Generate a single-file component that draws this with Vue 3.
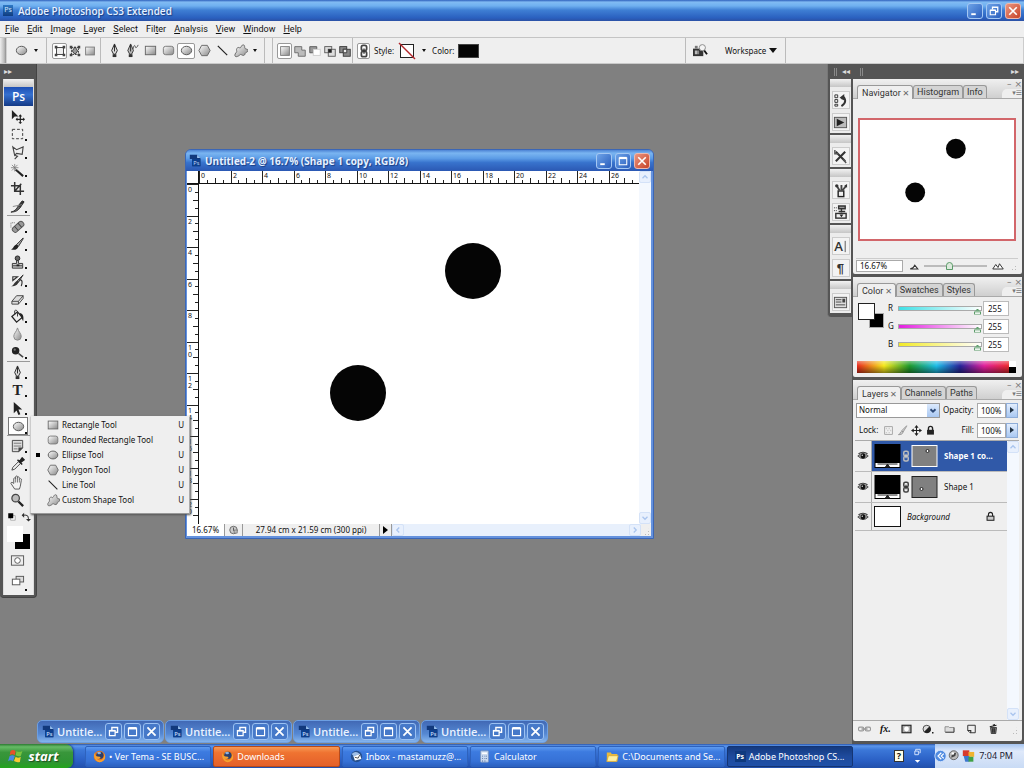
<script setup>
import { ref } from 'vue'

const menus = ['File', 'Edit', 'Image', 'Layer', 'Select', 'Filter', 'Analysis', 'View', 'Window', 'Help']
const accel = { Filter: 3 }
const menuParts = menus.map((m) => {
  const i = accel[m] || 0
  return { name: m, pre: m.slice(0, i), key: m[i], post: m.slice(i + 1) }
})

const star = 'M2 13c0-2 2-3 2-4S3 6 5 5s2 1 3 0 1-3 3-3 1 3 2 4 3 0 3 2-3 2-3 3-1 3-3 2-2-1-3 0-5 3-5 0Z'
const icons = {
  rect: '<rect x="2.500" y="3.500" width="11" height="9" fill="url(#metal)" stroke="#666"/>',
  rrect: '<rect x="2.500" y="3.500" width="11" height="9" rx="2.500" fill="url(#metal)" stroke="#777"/>',
  ellipse: '<ellipse cx="8" cy="8" rx="5.500" ry="4.500" fill="url(#metal)" stroke="#555"/>',
  polygon: '<path d="M5 2.500h6l3 5.500-3 5.500H5L2 8Z" fill="url(#metal)" stroke="#666"/>',
  line: '<path d="M3 3l10 10" stroke="#222" stroke-width="1.300"/>',
  custom: `<path d="${star}" fill="url(#metal)" stroke="#666"/>`,
  shapeLayer: '<path d="M4 4h8v8H4Z" fill="#eee" stroke="#333"/><path d="M2 2h3v3H2zM11 2h3v3h-3zM2 11h3v3H2zM11 11h3v3h-3z" fill="#444"/>',
  paths: '<path d="M4 4h8v8H4Z" fill="none" stroke="#333" stroke-dasharray="2 1"/><path d="M2 2h3v3H2zM11 2h3v3h-3zM2 11h3v3H2zM11 11h3v3h-3z" fill="#444"/><path d="M8 3l3 5-2 3H7L5 8Z" fill="#999" stroke="#333"/>',
  fillPx: '<rect x="3" y="3.500" width="10" height="9" fill="url(#metal)" stroke="#777"/>',
  pen: '<path d="M8 1l3 7-2 4H7L5 8Z" fill="#ddd" stroke="#222"/><path d="M8 2v7" stroke="#222"/><path d="M6 12h4v3H6z" fill="#333"/>',
  freePen: '<path d="M6 1l3 7-2 4H5L3 8Z" fill="#bbb" stroke="#333"/><path d="M6 2v7" stroke="#222"/><path d="M4 12h4v3H4z" fill="#333"/><path d="M9 6c0-4 2-4 2-2s2 1 3-2" fill="none" stroke="#555"/>',
  union: '<path d="M2 3h8v4h4v7H6v-4H2Z" fill="#bbb" stroke="#666"/>',
  newShape: '<rect x="3" y="3" width="10" height="10" fill="url(#metal)" stroke="#777"/>',
  subtract: '<path d="M2 10V3h8v3H6v4Z" fill="#999" stroke="#555"/><rect x="6" y="6" width="8" height="7" fill="#fff" stroke="#ccc"/>',
  intersect: '<rect x="2" y="3" width="8" height="7" fill="#ddd" stroke="#555"/><rect x="6" y="6" width="8" height="8" fill="#ddd" stroke="#555"/><path d="M6 6h4v4H6z" fill="#222"/>',
  exclude: '<rect x="2" y="3" width="8" height="7" fill="#888" stroke="#333"/><rect x="6" y="6" width="8" height="8" fill="#888" stroke="#333"/><path d="M6 6h4v4H6z" fill="#eee" stroke="#333"/>',
  chain: '<rect x="5" y="1.500" width="6" height="6" rx="2" fill="none" stroke="#444" stroke-width="2"/><rect x="5" y="8.500" width="6" height="6" rx="2" fill="none" stroke="#444" stroke-width="2"/><path d="M8 5v6" stroke="#333" stroke-width="1.500"/>',
  bridge: '<path d="M1 6h11v8H1Z" fill="#333"/><path d="M3 3h3v3H3z" fill="#777"/><path d="M3 8h3v4H3z" fill="#bbb"/><path d="M7 8v4" stroke="#999"/><circle cx="11" cy="5" r="3.300" fill="#f4f4f4" stroke="#888"/><path d="M13 8l3 4" stroke="#111" stroke-width="2"/>',
  move: '<path d="M2 1v10l3-3 4 0Z" fill="#222"/><path d="M11 7v8M7 11h8" stroke="#222" stroke-width="1.300"/><path d="M11 5.500l-2 2.500h4zM11 16l-2-2h4zM6 11l2-2v4zM16 11l-2-2v4z" fill="#222"/>',
  marquee: '<rect x="2.500" y="2.500" width="11" height="10" fill="none" stroke="#333" stroke-dasharray="3 2"/>',
  lasso: '<path d="M3 2l4 3 7-3-1 8-6-1-2 2ZM5 11l3 1-3 3" fill="none" stroke="#444" stroke-width="1.200"/>',
  wand: '<path d="M6 7l8 7" stroke="#222" stroke-width="2.200"/><path d="M5 1v8M1 5h8M2 2l6 6M8 2L2 8" stroke="#777" stroke-width=".8"/>',
  crop: '<path d="M5 1v10h10M1 5h10v10M12 3l-7 8" fill="none" stroke="#333" stroke-width="1.600"/>',
  slice: '<path d="M1 14c4-1 6-3 8-7l2 2c-2 3-5 5-10 5Z" fill="#666" stroke="#333"/><path d="M9 7l4-5 2 1-4 6" fill="#333" stroke="#222"/><path d="M3 8l10-2" stroke="#888"/>',
  heal: '<g transform="rotate(-42 9 8)"><rect x="1.500" y="5" width="14" height="6" rx="2.500" fill="#999" stroke="#555"/><path d="M6 5v6M11 5v6" stroke="#444"/></g><path d="M1 9V4h5" fill="none" stroke="#666" stroke-dasharray="1 1"/>',
  brush: '<path d="M14 1L7 8l2 2 5-8Z" fill="#aaa" stroke="#333"/><path d="M1 13c3 0 2-4 6-5l2 2c-1 4-5 4-8 3Z" fill="#222"/>',
  stamp: '<circle cx="8" cy="3.500" r="2.500" fill="#666" stroke="#222"/><path d="M7 6h2v3h4.500v5h-11V9H7Z" fill="#ccc" stroke="#333"/><path d="M3 11.500h10" stroke="#333"/><path d="M7 10h3v2H7z" fill="#222"/>',
  history: '<path d="M14 2L8 8l1 2Z" fill="#888" stroke="#333"/><path d="M1 14c3 0 3-4 7-6l1 2c-2 4-5 4-8 4Z" fill="#333"/><path d="M3 4h5l-5 4ZM10 7c4 0 3 4 2 7" fill="none" stroke="#333" stroke-width="1.200"/>',
  eraser: '<path d="M2 11l5-6h7l-5 6ZM2 11v3h7v-3M9 14l5-6V5" fill="#ddd" stroke="#444"/>',
  bucket: '<path d="M2 8l6-5 5 6-6 5Z" fill="#eee" stroke="#222" stroke-width="1.300"/><path d="M5 6V2c0-1 3-1 3 1v5" fill="none" stroke="#333"/><path d="M10 4c4 1 5 4 4 9l-2-4Z" fill="#222"/>',
  drop: '<path d="M8 1c1 4 4 6 4 9a4 4 0 0 1-8 0c0-3 3-5 4-9Z" fill="url(#metal)" stroke="#888"/>',
  dodge: '<circle cx="6" cy="6" r="4" fill="#222"/><circle cx="5" cy="5" r="1.200" fill="#777"/><path d="M9 9l5 4" stroke="#444" stroke-width="1.600"/>',
  text: '<text x="8" y="13" text-anchor="middle" font-family="Liberation Serif, serif" font-size="16" font-weight="700" fill="#222">T</text>',
  arrow: '<path d="M4 1v12l3-3 2 5 2-1-2-5h4Z" fill="#222"/>',
  note: '<path d="M2.500 1.500h11v8l-4 4h-7Z" fill="#ddd" stroke="#444"/><path d="M4 4.500h8M4 7.500h8M4 10.500h4" stroke="#777"/><path d="M9 14V9h5Z" fill="#444"/>',
  dropper: '<path d="M2 14l1-3 6-6 2 2-6 6Z" fill="#eee" stroke="#444"/><path d="M8 3l5 5M10 5l3-4 2 2-4 3Z" fill="#222" stroke="#222" stroke-width="1.600"/>',
  hand: '<path d="M5 15l-4-6c0-2 2-1 3 0V4c1-2 2-1 2 0V2c1-2 2-1 2 0v1c1-2 2-1 2 1v1c1-2 3-1 2 1l-1 6-1 3Z" fill="#f2f2f2" stroke="#555"/><path d="M6 4v4M8 3v5M10 4v4" stroke="#777"/>',
  zoom: '<circle cx="6" cy="5.500" r="4" fill="#bbb" stroke="#444" stroke-width="1.300"/><path d="M9 9l5 5" stroke="#222" stroke-width="2.400"/>',
  quick: '<rect x="1.500" y="3" width="13" height="10" fill="#eee" stroke="#555"/><circle cx="8" cy="8" r="3" fill="#fff" stroke="#555"/>',
  screen: '<rect x="6.500" y="2.500" width="8" height="6" fill="#ddd" stroke="#555"/><rect x="2.500" y="5.500" width="8" height="6" fill="#fff" stroke="#555"/>',
  miniColors: '<rect x="6" y="6" width="7" height="7" fill="#fff" stroke="#888"/><rect x="2" y="2" width="8" height="8" fill="#000"/>',
  swap: '<path d="M3 5h5q4 0 4 6" fill="none" stroke="#333" stroke-width="1.600"/><path d="M1 5l4-4v8ZM12 15L8 11h8Z" fill="#333"/>',
  dHistory: '<path d="M2 2h3v3H2zM2 7h3v3H2zM2 12h3v2H2z" fill="#eee" stroke="#333"/><path d="M9 14q6-4 3-9l-3 1" fill="none" stroke="#333" stroke-width="2"/><path d="M7 5l5-4v7Z" fill="#333"/>',
  dPlay: '<rect x="1.500" y="2.500" width="13" height="11" fill="#bbb" stroke="#555"/><path d="M4 4l8 4-8 4Z" fill="#222"/>',
  dTools: '<path d="M3 3l10 10M13 3L3 13" stroke="#333" stroke-width="2.200"/><path d="M2 1v4h4M14 15l-3-4" fill="none" stroke="#555" stroke-width="1.600"/>',
  dBrush: '<rect x="5.500" y="8.500" width="6" height="6" fill="#eee" stroke="#222" stroke-width="1.500"/><path d="M7 8L4 3M9 8V2M10 8l4-5" stroke="#444" stroke-width="2"/><circle cx="4" cy="3" r="1.800" fill="#333"/><path d="M12 3l3-2v4Z" fill="#333"/>',
  dClone: '<path d="M1 3h4M1 6h4" stroke="#333" stroke-dasharray="1 1"/><path d="M6 1h7v3H6zM9 4v4M6 7h7" fill="#999" stroke="#333" stroke-width="1.500"/><rect x="3" y="9" width="11" height="5" fill="#eee" stroke="#333" stroke-width="1.500"/><path d="M7 10h4l-2 3Z" fill="#222"/>',
  dChar: '<text x="6" y="13" text-anchor="middle" font-family="Open Sans, sans-serif" font-size="14" font-weight="600" fill="#333">A</text><path d="M13 2v12" stroke="#555"/>',
  dPara: '<text x="8" y="13" text-anchor="middle" font-family="Liberation Sans, sans-serif" font-size="14" font-weight="700" fill="#333">¶</text>',
  dComps: '<rect x="1.500" y="2.500" width="13" height="11" fill="#ddd" stroke="#555"/><path d="M3 5h6M3 7.500h6M3 10.500h10" stroke="#444"/><path d="M10 4h3v4h-3z" fill="#444"/>',
  eye: '<path d="M1 8q7-7 14 0-7 7-14 0Z" fill="#999" stroke="#333"/><circle cx="8" cy="8" r="3.200" fill="#111"/><path d="M2 5q6-4 12 0" fill="none" stroke="#333" stroke-width="1.500"/><circle cx="7" cy="7" r="1" fill="#ddd"/>',
  lockPx: '<rect x="2.500" y="2.500" width="11" height="11" fill="#f2f2f2" stroke="#888"/><path d="M4 4h2v2H4zM8 4h2v2H8zM6 7h2v2H6zM10 7h2v2h-2zM4 10h2v2H4zM8 10h2v2H8z" fill="#ccc"/>',
  lockBrush: '<path d="M14 1L7 8l2 2 5-8ZM2 14c3 0 2-4 5-5l2 1c-1 4-4 4-7 4Z" fill="#ccc" stroke="#888"/>',
  lockMove: '<path d="M8 2v12M2 8h12" stroke="#222" stroke-width="1.500"/><path d="M8 0L5 4h6zM8 16l-3-4h6zM0 8l4-3v6zM16 8l-4-3v6z" fill="#222"/>',
  lock: '<path d="M5 8V5a3 3 0 0 1 6 0v3" fill="none" stroke="#222" stroke-width="2"/><rect x="3" y="7" width="10" height="7" fill="#222"/>',
  lockOpen: '<path d="M5 8V5a3 3 0 0 1 6 0v3" fill="none" stroke="#222" stroke-width="1.600"/><rect x="3" y="7.500" width="10" height="6" fill="#ccc" stroke="#222" stroke-width="1.500"/>',
  fLink: '<rect x="0" y="5.500" width="7" height="5" rx="2" fill="none" stroke="#999" stroke-width="1.500"/><rect x="9" y="5.500" width="7" height="5" rx="2" fill="none" stroke="#999" stroke-width="1.500"/><path d="M4 8h8" stroke="#999" stroke-width="2"/>',
  fMask: '<rect x="2" y="3" width="12" height="10" fill="#aaa" stroke="#222" stroke-width="1.500"/><circle cx="8" cy="8" r="3.200" fill="#fff"/>',
  fAdj: '<circle cx="7" cy="8" r="5" fill="#ddd" stroke="#222"/><path d="M10.500 4.500a5 5 0 1 1-7 7Z" fill="#222"/><path d="M14 12h2v2h-2z" fill="#222"/>',
  fFolder: '<path d="M2 5h5l1 1h6v6H2Z" fill="#ddd" stroke="#777"/><path d="M2.500 12.500H14V6" fill="none" stroke="#333"/>',
  fNew: '<path d="M3 3h10v10H6l-3-3Z" fill="#eee" stroke="#333" stroke-width="1.300"/><path d="M3 10h4v3" fill="none" stroke="#333" stroke-width="1.500"/>',
  fTrash: '<path d="M4 6h8l-1 8H5Z" fill="#777" stroke="#222"/><path d="M3 5l9-2M7 3l3-1M7 7v6M9 7v6" stroke="#222" stroke-width="1.400"/>',
  firefox: '<circle cx="8" cy="8" r="7" fill="#e6781e"/><circle cx="8.500" cy="6.500" r="4.500" fill="#2c3f6b"/><path d="M2 3q0 5 4 5 4 0 3 2-3 2-5 0 4 5 8 1 3-3 1-8 4 6 0 10-5 4-9 0-4-4-2-10Z" fill="#f6a233"/><path d="M5 3q4-2 5 1-1 2-4 1Z" fill="#8db1df"/>',
  mail: '<circle cx="8" cy="8" r="7" fill="#26508f"/><path d="M4 7l8-2 2 6-8 2Z" fill="#fff"/><path d="M2 5q5-5 10 0l-7 3Z" fill="#9fbfe8"/><path d="M6 9l4 1 2-4" fill="none" stroke="#333"/>',
  calc: '<rect x="3" y="1" width="10" height="14" rx="1" fill="#c9d8ee" stroke="#7490be"/><path d="M5 3h6v2H5z" fill="#fff"/><path d="M5 7h1v1H5zM8 7h1v1H8zM10 7h1v1h-1zM5 10h1v1H5zM8 10h1v1H8zM10 10h1v1h-1zM5 13h1v1H5zM8 13h1v1H8z" fill="#36578f"/>',
  folder: '<path d="M1 3h5l1 2h7v9H1Z" fill="#e9b93c"/><path d="M3 7h12l-2 7H1Z" fill="#fff0a0" stroke="#d9a932"/>',
  min: '<path d="M3 11h6v2.500H3z" fill="#fff"/>',
  max: '<path d="M3 4h10v9H3Z" fill="none" stroke="#fff" stroke-width="1.400"/><path d="M3 4h10" stroke="#fff" stroke-width="3"/>',
  restore: '<path d="M6 6V3h7v6h-3" fill="none" stroke="#fff" stroke-width="1.700"/><path d="M3 7h7v6H3Z" fill="none" stroke="#fff" stroke-width="1.500"/><path d="M3 7h7" stroke="#fff" stroke-width="2"/>',
  close: '<path d="M3 3l10 10M13 3L3 13" stroke="#fff" stroke-width="2.200"/>',
  doc: '<path d="M1 1h9l4 4v10H4V6H1Z" fill="#12397c"/><path d="M10 1l4 4h-4Z" fill="#9cc4f2"/><path d="M4 6h10v9H4z" fill="#0d3f8d"/><text x="9" y="13" text-anchor="middle" font-family="Open Sans, sans-serif" font-size="7" fill="#c4dcfa">Ps</text>',
  up: '<path d="M4 10l4-4 4 4" fill="none" stroke="#a9c4ee" stroke-width="2"/>',
  down: '<path d="M4 6l4 4 4-4" fill="none" stroke="#a9c4ee" stroke-width="2"/>',
  left: '<path d="M10 4L6 8l4 4" fill="none" stroke="#a9c4ee" stroke-width="2"/>',
  right: '<path d="M6 4l4 4-4 4" fill="none" stroke="#a9c4ee" stroke-width="2"/>',
  chevron: '<path d="M4 6l4 4 4-4" fill="none" stroke="#2d4a78" stroke-width="3"/>',
  clock: '<circle cx="8" cy="8" r="6" fill="#ccc" stroke="#666" stroke-width="1.500"/><path d="M8 4v5h4" fill="none" stroke="#555" stroke-width="1.500"/><path d="M9 8h5v5H9z" fill="#bbb" stroke="#666"/>',
}

const toolGroups = [
  ['move', 'marquee', 'lasso', 'wand', 'crop', 'slice'],
  ['heal', 'brush', 'stamp', 'history', 'eraser', 'bucket', 'drop', 'dodge'],
  ['pen', 'text', 'arrow', 'ellipse'],
  ['note', 'dropper', 'hand', 'zoom'],
]
const plain = ['move', 'crop', 'hand', 'zoom']
const modeIcons = ['shapeLayer', 'paths', 'fillPx']
const shapeIcons = ['pen', 'freePen', 'rect', 'rrect', 'ellipse', 'polygon', 'line', 'custom']
const combineIcons = ['newShape', 'union', 'subtract', 'intersect', 'exclude']
const flyout = [
  ['rect', 'Rectangle Tool'], ['rrect', 'Rounded Rectangle Tool'], ['ellipse', 'Ellipse Tool'],
  ['polygon', 'Polygon Tool'], ['line', 'Line Tool'], ['custom', 'Custom Shape Tool'],
]
const dock = [['dHistory', 'dPlay'], ['dTools'], ['dBrush', 'dClone'], ['dChar', 'dPara'], ['dComps']]
const panels = [
  { id: 'navigator', tabs: ['Navigator', 'Histogram', 'Info'] },
  { id: 'color', tabs: ['Color', 'Swatches', 'Styles'] },
  { id: 'layers', tabs: ['Layers', 'Channels', 'Paths'] },
]
const channels = ref([
  { name: 'R', hue: 'cyan', value: 255 },
  { name: 'G', hue: 'magenta', value: 255 },
  { name: 'B', hue: 'yellow', value: 255 },
])
const layers = [
  { name: 'Shape 1 co...', kind: 'shape', active: true, x: 16, y: 6 },
  { name: 'Shape 1', kind: 'shape', x: 10, y: 13 },
  { name: 'Background', kind: 'background' },
]
const footer = ['fLink', 'fx', 'fMask', 'fAdj', 'fFolder', 'fNew', 'fTrash']
const tasks = [
  { icon: 'firefox', label: '• Ver Tema - SE BUSC...' },
  { icon: 'firefox', label: 'Downloads', state: 'alert' },
  { icon: 'mail', label: 'Inbox - mastamuzz@...' },
  { icon: 'calc', label: 'Calculator' },
  { icon: 'folder', label: 'C:\\Documents and Se...' },
  { icon: 'ps', label: 'Adobe Photoshop CS...', state: 'active' },
]

const unit = 15.75
const hTicks = Array.from({ length: 56 }, (_, i) => ({ p: Math.round(i * unit / 2), n: i / 2 }))
const vTicks = Array.from({ length: 43 }, (_, i) => ({ p: Math.round(i * unit / 2), n: i / 2 }))
const zoom = ref('16.67%')
const zoomPos = ref(40)
const blend = ref('Normal')
const opacity = ref('100%')
const fill = ref('100%')
</script>

<template>
  <div class="screen">
    <svg class="defs" aria-hidden="true">
      <linearGradient id="metal" x1="0" y1="0" x2="1" y2="1">
        <stop offset="0" stop-color="#fff" /><stop offset="1" stop-color="#888" />
      </linearGradient>
    </svg>

    <header class="titlebar">
      <span class="ps-mini">Ps</span>
      <h1>Adobe Photoshop CS3 Extended</h1>
      <div class="controls">
        <button aria-label="Minimize"><svg viewBox="0 0 16 16" v-html="icons.min" /></button>
        <button aria-label="Restore"><svg viewBox="0 0 16 16" v-html="icons.restore" /></button>
        <button class="red" aria-label="Close"><svg viewBox="0 0 16 16" v-html="icons.close" /></button>
      </div>
    </header>

    <nav class="menubar">
      <button v-for="m in menuParts" :key="m.name">{{ m.pre }}<u>{{ m.key }}</u>{{ m.post }}</button>
    </nav>

    <div class="options">
      <span class="grip" />
      <div class="group current">
        <button class="opt wide" aria-label="Ellipse tool"><svg viewBox="0 0 16 16" v-html="icons.ellipse" /></button>
        <button class="caret" aria-label="Tool presets" />
      </div>
      <div class="group modes">
        <button v-for="(i, n) in modeIcons" :key="i" class="opt" :class="{ on: n === 0 }" :aria-label="i"><svg viewBox="0 0 16 16" v-html="icons[i]" /></button>
      </div>
      <div class="group shapes">
        <button v-for="i in shapeIcons" :key="i" class="opt wide" :class="{ on: i === 'ellipse' }" :aria-label="i"><svg viewBox="0 0 16 16" v-html="icons[i]" /></button>
        <button class="caret" aria-label="Geometry options" />
      </div>
      <div class="group spacer" />
      <div class="group combine">
        <button v-for="(i, n) in combineIcons" :key="i" class="opt" :class="{ on: n === 0 }" :aria-label="i"><svg viewBox="0 0 16 16" v-html="icons[i]" /></button>
      </div>
      <div class="group style">
        <button class="opt slim on" aria-label="Link style"><svg viewBox="0 0 16 16" v-html="icons.chain" /></button>
        <span>Style:</span>
        <button class="nostyle" aria-label="Style picker"><svg viewBox="0 0 18 18"><rect x="2.500" y="2.500" width="13" height="13" fill="#fff" stroke="#222" /><path d="M1 1l16 16" stroke="#b3262b" stroke-width="1.500" /></svg></button>
        <button class="caret" aria-label="Styles" />
        <span>Color:</span>
        <button class="blackchip" aria-label="Shape color" />
      </div>
      <div class="group bridge">
        <button aria-label="Go to Bridge"><svg viewBox="0 0 17 16" v-html="icons.bridge" /></button>
        <button class="workspace-menu">Workspace <i /></button>
      </div>
      <div class="group end" />
    </div>

    <main class="stage">
      <aside class="toolbox">
        <div class="dark-head"><span>▸▸</span></div>
        <div class="toolpanel">
          <div class="bar-grip" />
          <div class="ps-logo">Ps</div>
          <div v-for="(g, gi) in toolGroups" :key="gi" class="toolgroup">
            <button v-for="t in g" :key="t" class="tool" :class="{ picked: t === 'ellipse', more: !plain.includes(t) }" :aria-label="t">
              <svg viewBox="0 0 16 16" v-html="icons[t]" />
            </button>
          </div>
          <div class="minis">
            <button aria-label="Default colors"><svg viewBox="0 0 16 16" v-html="icons.miniColors" /></button>
            <button aria-label="Swap colors"><svg viewBox="0 0 16 16" v-html="icons.swap" /></button>
          </div>
          <div class="fgbg"><button class="bg" aria-label="Background color" /><button class="fg" aria-label="Foreground color" /></div>
          <button class="tool" aria-label="Quick mask"><svg viewBox="0 0 16 16" v-html="icons.quick" /></button>
          <button class="tool tall more" aria-label="Screen mode"><svg viewBox="0 0 16 16" v-html="icons.screen" /></button>
        </div>
      </aside>

      <section class="docwin">
        <header class="doc-title">
          <svg class="docicon" viewBox="0 0 16 16" v-html="icons.doc" />
          <h2>Untitled-2 @ 16.7% (Shape 1 copy, RGB/8)</h2>
          <div class="controls">
            <button aria-label="Minimize document"><svg viewBox="0 0 16 16" v-html="icons.min" /></button>
            <button aria-label="Maximize document"><svg viewBox="0 0 16 16" v-html="icons.max" /></button>
            <button class="red" aria-label="Close document"><svg viewBox="0 0 16 16" v-html="icons.close" /></button>
          </div>
        </header>
        <div class="doc-body">
          <div class="corner" />
          <svg class="hruler">
            <g v-for="t in hTicks" :key="t.n">
              <path :d="`M${t.p} ${t.n % 2 === 0 ? 0 : t.n % 1 === 0 ? 7 : 9}V13`" />
              <text v-if="t.n % 2 === 0" :x="t.p + 2" y="7">{{ t.n }}</text>
            </g>
          </svg>
          <div class="scroll vert">
            <button aria-label="Scroll up"><svg viewBox="0 0 16 16" v-html="icons.up" /></button>
            <button aria-label="Scroll down"><svg viewBox="0 0 16 16" v-html="icons.down" /></button>
          </div>
          <svg class="vruler">
            <g v-for="t in vTicks" :key="t.n">
              <path :d="`M${t.n % 2 === 0 ? 0 : t.n % 1 === 0 ? 6 : 8} ${t.p}H13`" />
              <template v-if="t.n % 2 === 0">
                <text v-for="(c, ci) in String(t.n)" :key="ci" x="1" :y="t.p + 8 + ci * 7">{{ c }}</text>
              </template>
            </g>
          </svg>
          <svg class="canvas" role="img" aria-label="Canvas">
            <circle cx="274" cy="87" r="28" /><circle cx="159" cy="209" r="28" />
          </svg>
        </div>
        <footer class="doc-status">
          <span class="pct">16.67%</span>
          <button class="hist" aria-label="Version"><svg viewBox="0 0 16 16" v-html="icons.clock" /></button>
          <span class="dims">27.94 cm x 21.59 cm (300 ppi)</span>
          <button class="play" aria-label="Status options"><i /></button>
          <div class="scroll horiz">
            <button aria-label="Scroll left"><svg viewBox="0 0 16 16" v-html="icons.left" /></button>
            <button aria-label="Scroll right"><svg viewBox="0 0 16 16" v-html="icons.right" /></button>
          </div>
          <span class="size" />
        </footer>
      </section>

      <ul class="flyout">
        <li v-for="[i, label] in flyout" :key="i" :class="{ sel: i === 'ellipse' }">
          <button><svg viewBox="0 0 16 16" v-html="icons[i]" /><span>{{ label }}</span><kbd>U</kbd></button>
        </li>
      </ul>

      <div class="minimized">
        <div v-for="n in 4" :key="n" class="miniwin">
          <svg class="docicon" viewBox="0 0 16 16" v-html="icons.doc" />
          <span>Untitle...</span>
          <button aria-label="Restore"><svg viewBox="0 0 16 16" v-html="icons.restore" /></button>
          <button aria-label="Maximize"><svg viewBox="0 0 16 16" v-html="icons.max" /></button>
          <button aria-label="Close"><svg viewBox="0 0 16 16" v-html="icons.close" /></button>
        </div>
      </div>

      <aside class="dock">
        <div class="dark-head"><b /><span>◂◂</span></div>
        <div v-for="(g, gi) in dock" :key="gi" class="dockgroup">
          <div class="bar-grip" />
          <button v-for="d in g" :key="d" :aria-label="d"><svg viewBox="0 0 16 16" v-html="icons[d]" /></button>
        </div>
      </aside>

      <aside class="panels">
        <div class="dark-head split"><b /><span>▸▸</span></div>
        <section v-for="p in panels" :key="p.id" class="panel" :class="p.id">
          <header class="tabs">
            <button v-for="(t, ti) in p.tabs" :key="t" :class="{ front: ti === 0 }">{{ t }}<i v-if="ti === 0">×</i></button>
            <div class="corner-tools"><span>– ×</span><span class="flap">▾☰</span></div>
          </header>

          <div v-if="p.id === 'navigator'" class="nav-body">
            <svg class="preview" viewBox="0 0 154 120" role="img" aria-label="Preview"><circle cx="96" cy="29" r="10" /><circle cx="55" cy="73" r="10" /></svg>
            <div class="zoomrow">
              <input v-model="zoom" aria-label="Zoom">
              <svg class="mtn" viewBox="0 0 16 16"><path d="M3 12h10L9 7l-2 3Z" fill="#fff" stroke="#333" stroke-width="1.500" /></svg>
              <input v-model="zoomPos" class="zslider" type="range" aria-label="Zoom slider">
              <svg class="mtn" viewBox="0 0 16 16"><path d="M1 12l4-6 3 4 2-5 5 7Z" fill="#fff" stroke="#333" stroke-width="1.300" /></svg>
              <span class="size" />
            </div>
          </div>

          <div v-else-if="p.id === 'color'" class="color-body">
            <div class="colortop">
              <div class="chips"><button class="bg" aria-label="Background" /><button class="fg" aria-label="Foreground" /></div>
              <div class="sliders">
                <div v-for="c in channels" :key="c.name" class="chan">
                  <label :for="'c' + c.name">{{ c.name }}</label>
                  <input v-model="c.value" type="range" max="255" :class="c.hue" :aria-label="c.name + ' slider'">
                  <input :id="'c' + c.name" v-model="c.value" class="num">
                </div>
              </div>
            </div>
            <div class="spectrum"><i /></div>
          </div>

          <div v-else class="layers-body">
            <div class="lrow">
              <span class="selectbox"><select v-model="blend" aria-label="Blend mode"><option>Normal</option></select><svg viewBox="0 0 16 16" v-html="icons.chevron" /></span>
              <label for="opacity">Opacity:</label>
              <input id="opacity" v-model="opacity"><button class="pop" aria-label="Opacity slider"><i /></button>
            </div>
            <div class="lrow">
              <span class="locklabel">Lock:</span>
              <button v-for="i in ['lockPx', 'lockBrush', 'lockMove', 'lock']" :key="i" class="lk" :aria-label="i"><svg viewBox="0 0 16 16" v-html="icons[i]" /></button>
              <label for="fill" class="push">Fill:</label>
              <input id="fill" v-model="fill"><button class="pop" aria-label="Fill slider"><i /></button>
            </div>
            <div class="listwrap">
              <ul>
                <li v-for="l in layers" :key="l.name" :class="[l.kind, { active: l.active }]">
                  <button class="eye" aria-label="Visibility"><svg viewBox="0 0 16 16" v-html="icons.eye" /></button>
                  <div class="layer">
                    <svg v-if="l.kind === 'shape'" class="thumb" viewBox="0 0 26 24"><rect width="26" height="24" fill="#000" /><path d="M1 19h24v4H1z" fill="#fff" /><path d="M3 20h20M11 23l2-3 2 3Z" stroke="#222" fill="#222" /></svg>
                    <span v-else class="thumb white" />
                    <template v-if="l.kind === 'shape'">
                      <svg class="link" viewBox="3 0 10 16" v-html="icons.chain" />
                      <svg class="mask" viewBox="0 0 26 22"><rect x=".5" y=".5" width="25" height="21" fill="#808080" :stroke="l.active ? '#fff' : '#222'" /><circle :cx="l.x" :cy="l.y" r="1.500" fill="#fff" stroke="#222" /></svg>
                    </template>
                    <span class="lname">{{ l.name }}</span>
                    <svg v-if="l.kind === 'background'" class="lockicon" viewBox="0 0 16 16" v-html="icons.lockOpen" />
                  </div>
                </li>
              </ul>
              <div class="scroll vert">
                <button aria-label="Scroll up"><svg viewBox="0 0 16 16" v-html="icons.up" /></button>
                <button aria-label="Scroll down"><svg viewBox="0 0 16 16" v-html="icons.down" /></button>
              </div>
            </div>
            <div class="lfoot">
              <button v-for="f in footer" :key="f" :aria-label="f"><em v-if="f === 'fx'">fx.</em><svg v-else viewBox="0 0 16 16" v-html="icons[f]" /></button>
              <span class="size" />
            </div>
          </div>
        </section>
      </aside>
    </main>

    <footer class="taskbar">
      <button class="start">
        <svg viewBox="0 0 20 18"><path d="M3 3q3-2 6 0L8 8Q5 6 2 8Z" fill="#e8502c" /><path d="M10 3q3 2 7 0l-2 6q-3 1-6-1Z" fill="#79c340" /><path d="M2 9q3-2 6 0l-2 6q-3-2-6 0Z" fill="#4b87e8" /><path d="M9 10q3 2 6 0l-1 6q-4 1-7-1Z" fill="#f8ca34" /></svg>
        <span>start</span>
      </button>
      <div class="tasks">
        <button v-for="t in tasks" :key="t.label" :class="t.state">
          <b v-if="t.icon === 'ps'">Ps</b><svg v-else viewBox="0 0 16 16" v-html="icons[t.icon]" />
          <span>{{ t.label }}</span>
        </button>
      </div>
      <div class="lang"><b>?</b><svg viewBox="0 0 10 20"><path d="M3 4V2h5v4H7M2 4h4v4H2Z" fill="none" stroke="#dce9ff" /><path d="M2 14h6l-3 3Z" fill="#fff" /></svg></div>
      <div class="tray">
        <svg viewBox="0 0 16 16"><circle cx="8" cy="8" r="7" fill="#4f8ae0" stroke="#d8e8ff" /><path d="M9 4L5 8l4 4M12 5L9 8l3 3" fill="none" stroke="#fff" stroke-width="1.500" /></svg>
        <svg viewBox="0 0 16 16"><circle cx="7" cy="7" r="5.500" fill="#bbb" stroke="#555" /><path d="M4 10q0-6 6-6l-1 4Z" fill="#444" /><circle cx="6" cy="5" r="1.500" fill="#fff" /></svg>
        <svg viewBox="0 0 16 16"><path d="M1 1h8v7H1z" fill="#d83a2e" /><path d="M8 3h7v6H8z" fill="#f0b32f" /><path d="M2 8h7v7H4z" fill="#3d78cf" /><path d="M8 9h6v6H8z" fill="#3fa145" /></svg>
        <time>7:04 PM</time>
      </div>
    </footer>
  </div>
</template>

<style>
html, body { margin: 0; background: #808080; }
</style>

<style scoped>
* { box-sizing: border-box; }
.screen { display: flex; flex-direction: column; height: 100vh; min-width: 900px; overflow: hidden; font-family: "Noto Sans", "Open Sans", sans-serif; font-size: 8px; line-height: 12px; color: #111; background: #808080; }
.defs { position: absolute; width: 0; height: 0; }
button { font: inherit; color: inherit; background: none; border: 0; padding: 0; margin: 0; display: flex; align-items: center; justify-content: center; white-space: nowrap; }
button svg { display: block; }
input, select { font: inherit; color: inherit; margin: 0; min-width: 0; }
ul { margin: 0; padding: 0; list-style: none; }

.titlebar { display: flex; align-items: center; height: 21px; flex: none; padding: 0 3px; background: linear-gradient(#2f61bd 0, #81bbf3 10%, #6fb0f0 28%, #3f7fd4 48%, #2a60bf 85%, #2b51a5 100%); }
.ps-mini { width: 10px; height: 11px; background: linear-gradient(#2e78c4, #0f3c80); color: #cfe6ff; font-size: 7px; line-height: 10px; text-align: center; }
h1, h2 { flex: 1; margin: 0; color: #e6f1ff; text-shadow: 1px 1px 1px #1c3f85; font-family: "Open Sans", "Noto Sans", sans-serif; font-weight: 600; white-space: nowrap; overflow: hidden; }
h1 { padding-left: 5px; font-size: 10px; line-height: 16px; }
.controls { display: flex; gap: 3px; }
.controls button { width: 16px; height: 16px; border: 1px solid #a5c8f3; border-radius: 3px; background: linear-gradient(135deg, #6da3e8, #2a5ebd); }
.controls button.red { background: linear-gradient(135deg, #ea9580, #c84428); border-color: #edb9ae; }
.controls svg { width: 12px; height: 12px; }

.menubar { display: flex; gap: 8px; flex: none; height: 16px; padding: 0 5px 1px; background: #efefef; font-family: Roboto, "Noto Sans", sans-serif; font-size: 9px; }
.menubar u { text-underline-offset: 1px; }

.options { display: flex; flex: none; height: 27px; background: #efefef; border-top: 1px solid #c4c4c4; border-bottom: 1px solid #c9c9c9; }
.grip { width: 7px; background: linear-gradient(90deg, #eee, #bbb 60%, #999 80%, #eee); }
.group { display: flex; align-items: center; border-right: 1px solid #bbb; padding: 0 4px; }
.current { padding-left: 5px; }
.modes { padding: 0 3px 0 5px; }
.combine { padding: 0 0 0 4px; }
.shapes { padding: 0 3px 0 4px; }
.spacer { width: 8px; padding: 0; }
.opt { width: 15px; height: 16px; }
.opt.wide { width: 18px; }
.opt.slim { width: 13px; }
.opt svg { width: 14px; height: 14px; flex: none; }
.opt.wide svg { width: 15px; height: 15px; }
.opt.on { background: #fff; border: 1px solid #999; border-radius: 2px; }
.caret { width: 12px; height: 14px; }
.caret::before { content: ""; border: 2px solid transparent; border-top: 3px solid #111; border-bottom: 0; }
.style { flex: 1; gap: 4px; border-right-color: #bbb; }
.nostyle svg { width: 18px; height: 18px; }
.style .caret { width: 8px; }
.blackchip { width: 21px; height: 14px; background: #050505; border: 1px solid #444; }
.bridge { width: 100px; gap: 16px; padding-left: 5px; }
.bridge svg { width: 18px; height: 15px; }
.workspace-menu i { margin-left: 3px; border: 4px solid transparent; border-top: 5px solid #111; border-bottom: 0; }
.end { width: 238px; border-right-color: #ccc; }

.stage { position: relative; display: flex; flex: 1; min-height: 0; align-items: flex-start; background: #808080; }
.dark-head { display: flex; align-items: center; height: 15px; padding: 0 3px; color: #ddd; font-size: 8px; line-height: 10px; font-family: "DejaVu Sans", sans-serif; }
.dark-head b { width: 3px; height: 8px; border: 1px solid #8a8a8a; border-width: 0 1px; margin: 0 5px 0 4px; }
.split { justify-content: space-between; }
.bar-grip { height: 8px; background: linear-gradient(#f2f2f2, #c6c6c6); }

.toolbox { width: 37px; padding: 0 2px 2px 3px; background: #555; border: 1px solid #444; border-width: 0 1px 1px 0; border-radius: 0 0 4px 4px; }
.toolbox .dark-head { padding: 0 1px; }
.toolpanel { background: #efefef; border: 1px solid #ddd; border-width: 0 1px; padding-bottom: 2px; }
.ps-logo { height: 19px; margin-bottom: 1px; background: linear-gradient(#1d4fb4, #3570cf 40%, #143a86); color: #fff; text-align: center; font: 600 12px/19px "Open Sans", "Noto Sans", sans-serif; }
.toolgroup + .toolgroup { border-top: 1px solid #999; margin: 0 3px; padding-top: 1px; }
.toolgroup + .toolgroup .tool { margin: 0 -3px; width: calc(100% + 6px); }
.tool { position: relative; width: 100%; height: 18px; padding-right: 2px; }
.tool svg { width: 15px; height: 15px; }
.tool.more::after { content: ""; position: absolute; right: 6px; bottom: 2px; border: 1px solid #111; }
.toolgroup .tool.picked { height: 18px; width: 20px; margin-left: 1px; margin-right: auto; background: #fff; border: 1px solid #777; padding: 0; }
.tool.picked.more::after { right: 0; bottom: 0; }
.tool.tall { height: 24px; }
.tool.tall svg { height: 17px; }
.minis { display: flex; justify-content: center; gap: 4px; height: 16px; }
.minis svg { width: 10px; height: 10px; }
.fgbg { position: relative; height: 26px; }
.fgbg button, .chips button { position: absolute; }
.fgbg .fg { left: 3px; top: 1px; width: 16px; height: 16px; background: #fff; }
.fgbg .bg { left: 11px; top: 9px; width: 15px; height: 15px; background: #000; }

.flyout { position: absolute; left: 30px; top: 352px; width: 160px; padding: 0 0 6px; background: #efefef; border: 1px solid #c8c8c8; border-color: #eee #aaa #999 #ccc; box-shadow: 1px 1px 2px #555; }
.flyout button { position: relative; display: flex; width: 100%; height: 15px; padding: 0 5px 0 15px; }
.flyout svg { width: 14px; height: 14px; margin-right: 2px; flex: none; }
.flyout span { flex: 1; text-align: left; }
.flyout kbd { font: inherit; }
.flyout .sel button::before { content: ""; position: absolute; left: 5px; top: 6px; width: 4px; height: 4px; background: #000; }

.docwin { position: absolute; left: 185px; top: 85px; width: 469px; height: 390px; display: flex; flex-direction: column; border: 1px solid #3b66b5; border-radius: 6px 6px 0 0; background: #6592dd; padding: 0 2px 2px 1px; }
.doc-title { display: flex; align-items: center; height: 21px; flex: none; margin: 0 -2px 0 -1px; padding: 0 3px; border-radius: 5px 5px 0 0; background: linear-gradient(#4d84d5, #7ab5f1 15%, #5c9ce6 40%, #3873cd 60%, #2b58b3); }
.docicon { width: 13px; height: 13px; flex: none; }
h2 { padding-left: 3px; font-size: 10px; font-weight: 700; line-height: 16px; }
.doc-body { flex: 1; min-height: 0; display: grid; grid-template: 13px 1fr / 12px 1fr 12px; background: #fff; }
.corner { border-right: 1px solid #111; border-bottom: 1px solid #111; background: radial-gradient(#666 20%, #fff 25%) 0 0 / 4px 4px; }
.hruler, .vruler, .canvas { display: block; width: 100%; height: 100%; overflow: hidden; }
.canvas, .preview { fill: #050505; }
.hruler { border-bottom: 1px solid #111; }
.vruler { border-right: 1px solid #111; }
.hruler path, .vruler path { stroke: #222; shape-rendering: crispEdges; }
.hruler text, .vruler text { font: 7px "Noto Sans", sans-serif; fill: #111; }
.scroll { display: flex; justify-content: space-between; background: #f4f8fe; }
.scroll button { width: 12px; height: 12px; background: #e8f0fd; border: 1px solid #d4e2f8; border-radius: 2px; flex: none; }
.scroll svg { width: 10px; height: 10px; }
.vert { flex-direction: column; width: 12px; }
.doc-body .vert { grid-row: 1 / 3; grid-column: 3; }
.horiz { flex: 1; background: #e8f0fc; }
.doc-status { display: flex; height: 12px; flex: none; background: #efefef; }
.doc-status > * { border-right: 1px solid #999; }
.pct { width: 38px; text-align: center; background: #fff; }
.hist { width: 18px; }
.hist svg { width: 11px; height: 10px; }
.dims { width: 137px; text-align: center; }
.play { width: 12px; }
.play i { border: 4px solid transparent; border-left: 5px solid #000; border-right: 0; }
.doc-status .horiz { border-right: 0; }
.size { width: 10px; align-self: stretch; border: 0; background: radial-gradient(#bbb 25%, transparent 30%) 0 0 / 3px 3px; clip-path: polygon(100% 20%, 100% 100%, 10% 100%); }

.minimized { position: absolute; left: 37px; bottom: 1px; display: flex; gap: 1px; }
.miniwin { display: flex; align-items: center; gap: 2px; width: 127px; height: 23px; padding: 0 3px 0 4px; border: 1px solid #6d9fe2; border-radius: 5px; background: linear-gradient(#4169b5, #5487d2 60%, #84b4ed); color: #eaf3ff; font: 600 11px/16px "Open Sans", "Noto Sans", sans-serif; }
.miniwin span { flex: 1; }
.miniwin button { width: 17px; height: 17px; border: 1px solid #9bc1f2; border-radius: 3px; background: #4679c9; }
.miniwin button svg { width: 13px; height: 13px; }

.dock { width: 25px; margin-left: auto; padding: 0 1px 2px 2px; background: #555; border-left: 1px solid #777; border-radius: 0 0 0 4px; }
.dock .dark-head { padding: 0; }
.dockgroup { display: flex; flex-direction: column; align-items: center; gap: 4px; margin-bottom: 2px; padding-bottom: 2px; background: #ececec; }
.dockgroup .bar-grip { width: 100%; }
.dockgroup button { width: 18px; height: 18px; border: 1px solid #ccc; background: #f3f3f3; }
.dockgroup svg { width: 15px; height: 15px; }

.panels { display: flex; flex-direction: column; gap: 3px; width: 172px; align-self: stretch; padding: 0 2px 3px 1px; background: #555; }
.panels > .dark-head { margin-bottom: -3px; flex: none; }
.panel { display: flex; flex-direction: column; background: #efefef; border-radius: 2px; }
.layers { flex: 1; min-height: 0; }
.tabs { display: flex; align-items: flex-end; height: 20px; flex: none; padding-left: 4px; background: linear-gradient(#f0f0f0, #cfcfcf); border-bottom: 1px solid #aaa; font-family: Roboto, "Noto Sans", sans-serif; font-size: 9px; }
.tabs button { height: 13px; padding: 0 3px; background: #d4d4d4; border: 1px solid #999; border-bottom: 0; border-radius: 3px 3px 0 0; color: #333; }
.tabs button.front { background: #efefef; height: 14px; margin-bottom: -1px; padding-left: 4px; }
.tabs i { font: 11px/12px "Noto Sans", sans-serif; margin-left: 2px; color: #666; }
.corner-tools { display: flex; flex-direction: column; margin-left: auto; text-align: right; align-self: stretch; width: 20px; font: 9px/10px "DejaVu Sans", sans-serif; color: #777; }
.flap { height: 9px; font-size: 7px; line-height: 9px; background: #efefef; border-radius: 5px 0 0 0; }

.navigator { height: 195px; }
.nav-body { display: flex; flex-direction: column; flex: 1; justify-content: flex-end; padding: 0 4px 2px 3px; }
.preview { margin: 0 2px 17px; height: 123px; background: #fff; border: 2px solid #d2666a; }
.zoomrow { display: flex; align-items: center; height: 14px; border-top: 1px solid #ccc; }
.zoomrow input:first-child { width: 47px; height: 12px; border: 1px solid #aaa; background: #fff; padding: 0 3px; }
.mtn { width: 14px; height: 12px; margin: 0 3px 0 4px; }
input[type="range"] { appearance: none; background: none; height: 12px; padding: 0; flex: 1; width: 0; }
.zslider::-webkit-slider-runnable-track { height: 2px; background: #bbb; }
.zslider::-webkit-slider-thumb { appearance: none; width: 7px; height: 8px; margin-top: -3px; background: #dce9dc; border: 1px solid #5b9b69; border-radius: 4px 4px 0 0; }

.color { height: 100px; }
.color-body { display: flex; flex-direction: column; flex: 1; padding: 2px 6px 4px 4px; }
.colortop { display: flex; flex: 1; }
.chips { position: relative; width: 28px; flex: none; }
.chips .fg { left: 1px; top: 4px; width: 17px; height: 17px; background: #fff; border: 1px solid #222; }
.chips .bg { left: 12px; top: 14px; width: 15px; height: 15px; background: #000; border: 1px solid #aaa; }
.sliders { flex: 1; min-width: 0; }
.chan { display: flex; align-items: center; height: 18px; padding-right: 7px; }
.chan label { width: 13px; padding-left: 3px; flex: none; }
.chan .num { width: 26px; height: 15px; margin-left: 1px; padding: 0 4px; border: 1px solid #bbb; background: #fff; flex: none; }
.chan input[type="range"]::-webkit-slider-runnable-track { height: 5px; border: 1px solid #aaa; }
.chan input[type="range"]::-webkit-slider-thumb { appearance: none; width: 7px; height: 6px; margin-top: 2px; background: linear-gradient(#5b9b69, #fff); clip-path: polygon(50% 0, 100% 60%, 100% 100%, 0 100%, 0 60%); border: 1px solid #5b9b69; }
.cyan::-webkit-slider-runnable-track { background: linear-gradient(90deg, #3fe0e6, #fff); }
.magenta::-webkit-slider-runnable-track { background: linear-gradient(90deg, #e41ee0, #fff); }
.yellow::-webkit-slider-runnable-track { background: linear-gradient(90deg, #f2ea28, #fff); }
.spectrum { display: flex; justify-content: flex-end; height: 12px; background: linear-gradient(#fff6, #fff0 40%, #0007), linear-gradient(90deg, #e8291c, #f5e81c 17%, #1f9b2c 33%, #1cbde8 50%, #28239b 65%, #e0209b 80%, #ee2a2a 96%); }
.spectrum i { width: 7px; background: linear-gradient(#fff 50%, #000 50%); }

.layers-body { display: flex; flex-direction: column; flex: 1; min-height: 0; }
.lrow { display: flex; align-items: center; height: 20px; padding: 0 4px 0 3px; }
.selectbox { position: relative; width: 84px; height: 15px; margin-right: 3px; }
.selectbox select { appearance: none; width: 100%; height: 15px; padding: 0 2px; background: #fff; border: 1px solid #999; border-radius: 0; }
.selectbox svg { position: absolute; right: 1px; top: 1px; width: 12px; height: 13px; padding: 1px; pointer-events: none; background: linear-gradient(#dceafd, #a9c8f2); }
.lrow input { width: 29px; height: 15px; margin-left: auto; padding: 0 3px; background: #fff; border: 1px solid #aaa; }
.pop { width: 12px; height: 15px; background: linear-gradient(#e3eefd, #a9c8f2); border: 1px solid #8fadd8; }
.pop i { border: 3px solid transparent; border-left: 4px solid #234; border-right: 0; }
.locklabel { width: 25px; padding-left: 3px; }
.lk { width: 14px; }
.lk svg { width: 11px; height: 11px; }
.push { margin-left: auto; }
.push + input { margin-left: 3px; }
.listwrap { display: flex; flex: 1; min-height: 0; border-top: 1px solid #aaa; margin: 0 3px 0 2px; }
.listwrap ul { flex: 1; min-width: 0; }
.listwrap li { display: flex; height: 31px; border-bottom: 1px solid #bbb; }
.listwrap li.background { height: 28px; }
.eye { width: 17px; border-right: 1px solid #aaa; }
.eye svg { width: 12px; height: 12px; }
.layer { display: flex; flex: 1; align-items: center; padding-left: 2px; }
.active .layer { background: #3059a8; color: #fff; font-weight: 700; }
.thumb { width: 27px; height: 24px; }
.thumb.white { height: 21px; background: #fff; border: 1px solid #111; }
.link { width: 8px; height: 12px; margin: 0 1px; }
.active .link { filter: invert(1); }
.mask { width: 27px; height: 22px; }
.lname { padding-left: 6px; white-space: nowrap; }
.background .lname { font-style: italic; }
.lockicon { width: 11px; height: 11px; margin: 0 11px 0 auto; }
.lfoot { display: flex; align-items: center; justify-content: space-between; height: 21px; flex: none; padding: 0 3px 4px 5px; border-top: 1px solid #aaa; }
.lfoot svg { width: 13px; height: 12px; }
.lfoot em { font: italic 700 10px/12px "Liberation Serif", serif; }
.lfoot .size { height: 12px; align-self: auto; }

.taskbar { display: flex; height: 24px; flex: none; background: linear-gradient(#2b55a8, #5b96ec 8%, #3b77d8 25%, #2a5fc4 70%, #2250ab); color: #fff; }
.start { width: 73px; height: 24px; flex: none; gap: 3px; margin-right: 12px; padding-right: 6px; border-radius: 0 8px 6px 0; background: linear-gradient(#2d7a33, #66bb66 12%, #39963b 35%, #2f9433 75%, #23a51c); box-shadow: 1px 0 2px #1b3d7f; }
.start svg { width: 17px; height: 16px; }
.start span { font: italic 700 13px/18px "Open Sans", "Noto Sans", sans-serif; text-shadow: 1px 1px 1px #1d4f1d; }
.tasks { display: flex; flex: 1; max-width: 768px; min-width: 0; gap: 2px; padding: 2px 0 1px; }
.tasks button { flex: 1; min-width: 0; justify-content: flex-start; padding-left: 7px; gap: 3px; border: 1px solid #2e62bd; border-radius: 2px; background: linear-gradient(#5e9bf0, #3d7be0 25%, #3671d6 75%, #2c62c2); font-size: 9px; }
.tasks svg { width: 13px; height: 13px; flex: none; }
.tasks b { width: 11px; height: 11px; font-size: 7px; line-height: 11px; background: #0e397e; }
.tasks .alert { background: linear-gradient(#f79a55, #ef7331 30%, #e4602a); border-color: #b54a1d; }
.tasks .active { background: linear-gradient(#143a80, #1e4a9c 50%, #1f50a8); border-color: #153573; }
.lang { display: flex; align-items: center; justify-content: flex-end; gap: 9px; margin-left: auto; padding-right: 13px; }
.lang b { width: 10px; height: 12px; background: #ffffe8; color: #111; border: 1px solid #333; text-align: center; font-size: 9px; line-height: 10px; }
.lang svg { width: 9px; height: 19px; }
.tray { display: flex; align-items: center; width: 89px; flex: none; background: linear-gradient(#a5c4f0, #dfe9fa 30%, #c9dbf5); color: #223; font-size: 9px; }
.tray svg { width: 13px; height: 14px; margin-right: 1px; }
.tray svg:first-child { margin-left: -1px; }
.tray time { margin-left: auto; padding-right: 11px; white-space: nowrap; }
</style>
